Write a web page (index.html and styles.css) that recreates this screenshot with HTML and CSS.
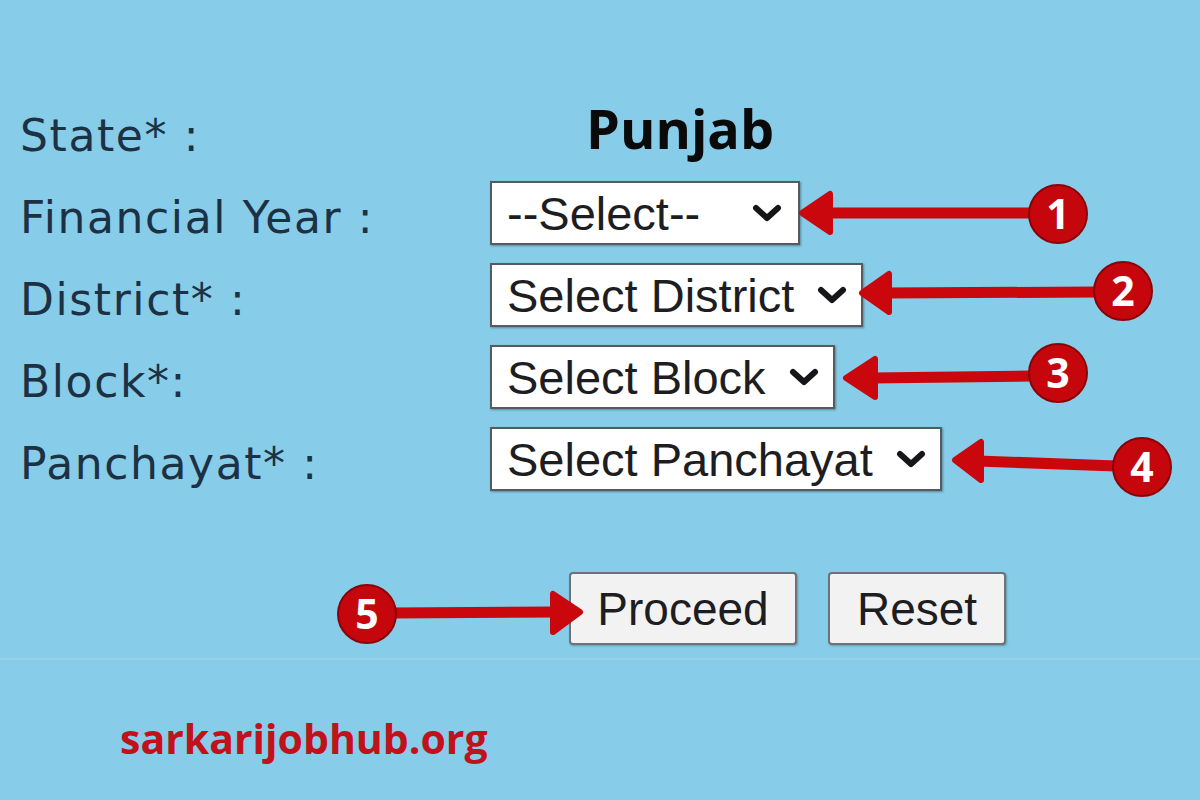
FILE: index.html
```html
<!DOCTYPE html>
<html lang="en">
<head>
<meta charset="utf-8">
<title>Punjab - Select</title>
<link rel="stylesheet" href="styles.css">
</head>
<body>
<div class="panel">
  <div class="form">
    <div class="label">State* :</div>
    <div class="title">Punjab</div>

    <div class="label">Financial Year :</div>
    <div class="field"><div class="select w1"><span>--Select--</span><svg class="chev" viewBox="0 0 30 20" width="30" height="20"><polyline points="4,5 15,15 26,5"/></svg></div></div>

    <div class="label">District* :</div>
    <div class="field"><div class="select w2"><span>Select District</span><svg class="chev" viewBox="0 0 30 20" width="30" height="20"><polyline points="4,5 15,15 26,5"/></svg></div></div>

    <div class="label">Block*:</div>
    <div class="field"><div class="select w3"><span>Select Block</span><svg class="chev" viewBox="0 0 30 20" width="30" height="20"><polyline points="4,5 15,15 26,5"/></svg></div></div>

    <div class="label">Panchayat* :</div>
    <div class="field"><div class="select w4"><span>Select Panchayat</span><svg class="chev" viewBox="0 0 30 20" width="30" height="20"><polyline points="4,5 15,15 26,5"/></svg></div></div>
  </div>
  <div class="actions">
    <button class="btn proceed">Proceed</button>
    <button class="btn reset">Reset</button>
  </div>
</div>
<div class="site">sarkarijobhub.org</div>

<svg class="marks" viewBox="0 0 1200 800" width="1200" height="800">
  <g class="arrow">
    <line x1="826" y1="213" x2="1032" y2="213"/>
    <polygon points="802,213 830,194 830,232"/>
  </g>
  <g class="arrow">
    <line x1="886" y1="293" x2="1096" y2="292"/>
    <polygon points="862,293 889,274 889,312"/>
  </g>
  <g class="arrow">
    <line x1="872" y1="378" x2="1032" y2="376"/>
    <polygon points="846,378 875,359 875,397"/>
  </g>
  <g class="arrow">
    <line x1="978" y1="461" x2="1116" y2="466"/>
    <polygon points="955,460 981,442 981,480"/>
  </g>
  <g class="arrow">
    <line x1="392" y1="613" x2="556" y2="612"/>
    <polygon points="580,612 553,594 553,632"/>
  </g>

  <g class="badge"><circle cx="1058" cy="214" r="29"/><text x="1058" y="229">1</text></g>
  <g class="badge"><circle cx="1123" cy="291" r="29"/><text x="1123" y="306">2</text></g>
  <g class="badge"><circle cx="1058" cy="373" r="29"/><text x="1058" y="388">3</text></g>
  <g class="badge"><circle cx="1142" cy="467" r="29"/><text x="1142" y="482">4</text></g>
  <g class="badge"><circle cx="367" cy="614" r="29"/><text x="367" y="629">5</text></g>
</svg>
</body>
</html>
```
FILE: styles.css
```css
html, body {
  margin: 0;
  padding: 0;
}

body {
  width: 1200px;
  height: 800px;
  background: #87cce8;
  position: relative;
  overflow: hidden;
  font-family: "DejaVu Sans", Verdana, sans-serif;
}

.panel {
  height: 660px;
  box-sizing: border-box;
  padding-top: 94px;
  border-bottom: 2px solid #98d1e8;
}

.form {
  display: grid;
  grid-template-columns: 490px auto;
  grid-auto-rows: 82px;
  align-items: center;
}

.label {
  padding-left: 20px;
  font-size: 44px;
  letter-spacing: 1.6px;
  color: #1c3143;
  white-space: nowrap;
}

.title {
  margin-left: 96px;
  font-family: "Open Sans", "Noto Sans", sans-serif;
  font-weight: 700;
  font-size: 54px;
  color: #0a0a0a;
  margin-top: -14px;
}

.field {
  display: flex;
  align-self: start;
  margin-top: 5px;
}

.select {
  display: flex;
  align-items: center;
  justify-content: space-between;
  height: 64px;
  box-sizing: border-box;
  border: 2px solid #565b60;
  background: #fff;
  padding: 0 14px 0 15px;
  font-family: "Liberation Sans", Arial, sans-serif;
  font-size: 47px;
  color: #1d1d22;
  box-shadow: 1px 1px 2px rgba(40, 60, 70, 0.45);
}

.w1 { width: 310px; padding-right: 16px; }
.w2 { width: 373px; }
.w3 { width: 345px; }
.w4 { width: 452px; }

.chev polyline {
  fill: none;
  stroke: #16161a;
  stroke-width: 6;
  stroke-linecap: round;
  stroke-linejoin: round;
}

.actions {
  display: flex;
  gap: 31px;
  padding-left: 569px;
  margin-top: 68px;
}

.btn {
  height: 73px;
  box-sizing: border-box;
  border: 2px solid #6d7276;
  border-radius: 4px;
  background: #f2f2f2;
  font-family: "Liberation Sans", Arial, sans-serif;
  font-size: 46px;
  color: #1d1d22;
  padding: 0;
  box-shadow: 1px 1px 2px rgba(40, 60, 70, 0.35);
}

.proceed { width: 228px; }
.reset { width: 178px; }

.site {
  padding-left: 120px;
  margin-top: 58px;
  font-family: "Open Sans", "Noto Sans", sans-serif;
  font-weight: 700;
  font-size: 41px;
  line-height: 1;
  color: #c1121c;
}

.marks {
  position: absolute;
  left: 0;
  top: 0;
  pointer-events: none;
}

.arrow line {
  stroke: #c9070d;
  stroke-width: 11;
}

.arrow polygon {
  fill: #c9070d;
  stroke: #c9070d;
  stroke-width: 6;
  stroke-linejoin: round;
}

.badge circle {
  fill: #c5070d;
  stroke: #8a0207;
  stroke-width: 2;
}

.badge text {
  fill: #ffffff;
  font-family: "Open Sans", "DejaVu Sans", sans-serif;
  font-weight: 700;
  font-size: 41px;
  text-anchor: middle;
}
```
